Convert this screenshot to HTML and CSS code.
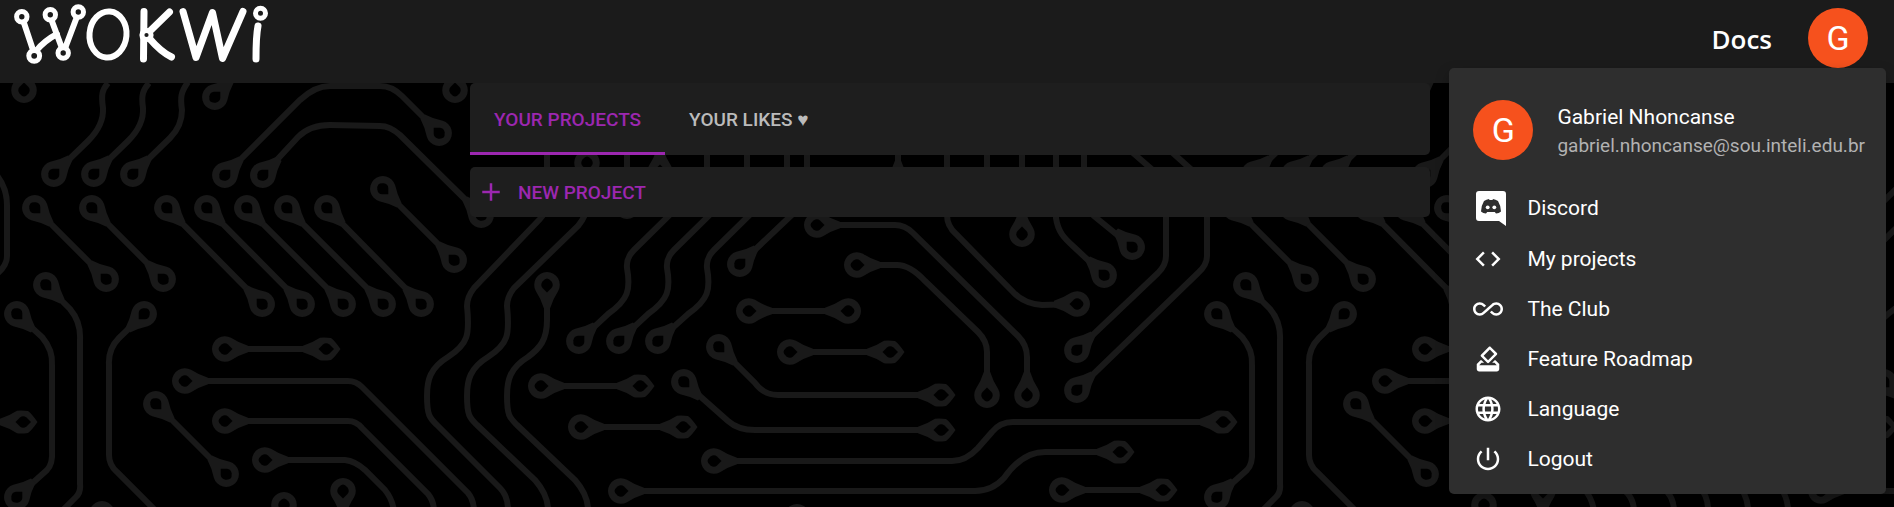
FILE: index.html
```html
<!DOCTYPE html>
<html lang="en">
<head>
<meta charset="utf-8">
<meta name="viewport" content="width=device-width, initial-scale=1">
<title>Wokwi - My projects</title>
<link rel="stylesheet" href="styles.css">
</head>
<body class="page">
<svg class="circuit" aria-hidden="true">
  <defs>
    <g id="pad">
      <path class="pad-body" d="M6 -11.2Q14 -6 23 -3.2V3.2Q14 6 6 11.2A12.8 12.8 0 1 1 6 -11.2Z"/>
      <path class="pad-hole" d="M7.5 0L3 4.5Q0 7 -3.5 4.5Q-6.5 2 -6.5 0Q-6.5 -2 -3.5 -4.5Q0 -7 3 -4.5Z"/>
    </g>
    <g id="pad-tip">
      <path class="pad-body" d="M6 -11.2Q14 -6 23 -3.2V3.2Q14 6 6 11.2Q2 12 -5 11Q-9 8 -14.5 0Q-9 -8 -5 -11Q2 -12 6 -11.2Z"/>
      <path class="pad-hole" d="M7.500 0L3 4.500Q0 7 -3.500 4.500L-8 0L-3.500 -4.500Q0 -7 3 -4.500Z"/>
    </g>
    <g id="tile">
      <g class="trace">
        <path d="M54 174L88 141Q104 125 103 108C101 95 102 90 108 83"/>
        <path d="M94 174L128 141Q144 125 143 108C141 95 143 90 149 83"/>
        <path d="M133 174L170 138Q182 126 182 110C180 97 181 92 188 82"/>
        <path d="M215 97L234 78"/>
        <path d="M225 175L300 100Q315 86 330 86H380Q392 86 402 96L439 133"/>
        <path d="M263 175L298 137Q310 125 330 125L380 126Q390 126 400 135L481 215"/>
        <path d="M35 208L106 279M92 208L163 279M167 208L262 304M207 208L302 304M247 208L343 304M287 208L383 304M327 208L421 304M383 189L454 260"/>
        <path d="M17 314L42 337Q53 350 52 365V450Q53 464 47 470L17 497"/>
        <path d="M46 285L70 309Q81 322 80 340V484Q81 492 76 497L55 518"/>
        <path d="M144 314L119 338Q108 349 109 365V455Q109 465 117 472L160 515"/>
        <path d="M225 349H326M156 404L226 474M343 491V515"/>
        <path d="M185 381H348Q356 381 362 387L468 493Q474 500 474 512"/>
        <path d="M225 421H348Q356 421 362 428L428 494Q434 501 434 512"/>
        <path d="M265 460H345Q355 461 365 470L385 490Q393 500 394 512"/>
        <path d="M547 150V195Q547 212 540 219L474 288Q467 297 467 306C470 335 468 344 448 357C430 368 427 380 427 396C427 416 430 418 437 425L500 488Q508 496 508 510"/>
        <path d="M587 163V205Q587 215 578 226L514 288Q507 297 507 306C510 335 508 344 488 357C470 368 467 380 467 396C467 416 470 418 477 425L535 480Q548 495 548 510"/>
        <path d="M547 285V320C547 340 540 348 528 357C510 368 507 380 507 396C507 416 510 418 517 425L575 480Q588 495 588 510"/>
        <path d="M627 150V207M660 150V172M898 150V180M987 150V170M1022 150V234"/>
        <path d="M707 150V168Q707 178 698 187L634 250Q626 258 627 268C631 290 628 300 608 314L579 341"/>
        <path d="M747 150V168Q747 178 738 187L674 250Q666 258 667 268C671 290 668 300 648 314L619 341"/>
        <path d="M787 150V168Q787 178 778 187L714 250Q706 258 707 268C711 290 708 300 688 314L658 341"/>
        <path d="M807 150V190Q807 200 798 209L740 264"/>
        <path d="M817 225H895Q905 225 913 233L1018 336Q1027 345 1027 357V395"/>
        <path d="M857 265H897Q910 265 925 281L978 332Q987 341 987 352V395"/>
        <path d="M947 150V215Q947 226 956 234L1013 292Q1024 304 1042 305L1077 304"/>
        <path d="M1056 150V218C1058 232 1064 238 1074 247L1104 275"/>
        <path d="M1084 150V195Q1084 207 1094 216L1132 247"/>
        <path d="M1125 146L1155 172Q1166 182 1166 200V256Q1166 265 1158 273L1077 350"/>
        <path d="M1165 146L1194 172Q1207 186 1207 205V256Q1207 265 1198 273L1077 390"/>
        <path d="M749 311H848M790 352H890M541 386H640M581 427H683M1062 490H1163"/>
        <path d="M719 347L755 383Q764 395 778 395H941"/>
        <path d="M684 382L728 421Q738 430 755 430H941"/>
        <path d="M714 461H950Q965 462 978 448L992 432Q1000 422 1013 422H1223"/>
        <path d="M621 491H975Q992 491 1004 478Q1022 452 1045 452H1120"/>
      </g>
      <use href="#pad" transform="translate(24 90) rotate(-90)"/>
      <use href="#pad" transform="translate(54 174) rotate(-45)"/>
      <use href="#pad" transform="translate(94 174) rotate(-45)"/>
      <use href="#pad" transform="translate(133 174) rotate(-45)"/>
      <use href="#pad" transform="translate(215 97) rotate(-45)"/>
      <use href="#pad" transform="translate(225 175) rotate(-45)"/>
      <use href="#pad" transform="translate(263 175) rotate(-45)"/>
      <use href="#pad" transform="translate(439 133) rotate(-135)"/>
      <use href="#pad" transform="translate(455 90) rotate(-90)"/>
      <use href="#pad" transform="translate(481 215) rotate(-135)"/>
      <use href="#pad" transform="translate(35 208) rotate(45)"/>
      <use href="#pad" transform="translate(106 279) rotate(-135)"/>
      <use href="#pad" transform="translate(92 208) rotate(45)"/>
      <use href="#pad" transform="translate(163 279) rotate(-135)"/>
      <use href="#pad" transform="translate(167 208) rotate(45)"/>
      <use href="#pad" transform="translate(262 304) rotate(-135)"/>
      <use href="#pad" transform="translate(207 208) rotate(45)"/>
      <use href="#pad" transform="translate(302 304) rotate(-135)"/>
      <use href="#pad" transform="translate(247 208) rotate(45)"/>
      <use href="#pad" transform="translate(343 304) rotate(-135)"/>
      <use href="#pad" transform="translate(287 208) rotate(45)"/>
      <use href="#pad" transform="translate(383 304) rotate(-135)"/>
      <use href="#pad" transform="translate(327 208) rotate(45)"/>
      <use href="#pad" transform="translate(421 304) rotate(-135)"/>
      <use href="#pad" transform="translate(383 189) rotate(45)"/>
      <use href="#pad" transform="translate(454 260) rotate(-135)"/>
      <use href="#pad" transform="translate(17 314) rotate(45)"/>
      <use href="#pad" transform="translate(17 497) rotate(-45)"/>
      <use href="#pad" transform="translate(46 285) rotate(45)"/>
      <use href="#pad" transform="translate(144 314) rotate(135)"/>
      <use href="#pad" transform="translate(225 349)"/>
      <use href="#pad-tip" transform="translate(326 349) rotate(180)"/>
      <use href="#pad" transform="translate(185 381)"/>
      <use href="#pad" transform="translate(225 421)"/>
      <use href="#pad" transform="translate(265 460)"/>
      <use href="#pad" transform="translate(156 404) rotate(45)"/>
      <use href="#pad" transform="translate(226 474) rotate(-135)"/>
      <use href="#pad" transform="translate(343 491) rotate(90)"/>
      <use href="#pad" transform="translate(284 505) rotate(90)"/>
      <use href="#pad" transform="translate(102 514) rotate(90)"/>
      <use href="#pad" transform="translate(797 517) rotate(90)"/>
      <use href="#pad" transform="translate(587 163) rotate(90)"/>
      <use href="#pad" transform="translate(547 285) rotate(90)"/>
      <use href="#pad" transform="translate(627 206) rotate(-90)"/>
      <use href="#pad" transform="translate(660 172) rotate(-90)"/>
      <use href="#pad" transform="translate(898 184) rotate(-90)"/>
      <use href="#pad" transform="translate(579 341) rotate(-45)"/>
      <use href="#pad" transform="translate(619 341) rotate(-45)"/>
      <use href="#pad" transform="translate(658 341) rotate(-45)"/>
      <use href="#pad" transform="translate(740 264) rotate(-45)"/>
      <use href="#pad" transform="translate(817 225)"/>
      <use href="#pad" transform="translate(857 265)"/>
      <use href="#pad" transform="translate(987 395) rotate(-90)"/>
      <use href="#pad" transform="translate(1027 395) rotate(-90)"/>
      <use href="#pad" transform="translate(1022 234) rotate(-90)"/>
      <use href="#pad" transform="translate(1077 304) rotate(180)"/>
      <use href="#pad" transform="translate(1104 275) rotate(-135)"/>
      <use href="#pad" transform="translate(1132 247) rotate(-135)"/>
      <use href="#pad" transform="translate(1077 350) rotate(-45)"/>
      <use href="#pad" transform="translate(1077 390) rotate(-45)"/>
      <use href="#pad" transform="translate(749 311)"/>
      <use href="#pad" transform="translate(848 311) rotate(180)"/>
      <use href="#pad" transform="translate(790 352)"/>
      <use href="#pad-tip" transform="translate(890 352) rotate(180)"/>
      <use href="#pad" transform="translate(541 386)"/>
      <use href="#pad-tip" transform="translate(640 386) rotate(180)"/>
      <use href="#pad" transform="translate(581 427)"/>
      <use href="#pad-tip" transform="translate(683 427) rotate(180)"/>
      <use href="#pad" transform="translate(719 347) rotate(45)"/>
      <use href="#pad" transform="translate(684 382) rotate(45)"/>
      <use href="#pad-tip" transform="translate(941 395) rotate(180)"/>
      <use href="#pad-tip" transform="translate(941 430) rotate(180)"/>
      <use href="#pad" transform="translate(714 461)"/>
      <use href="#pad" transform="translate(621 491)"/>
      <use href="#pad-tip" transform="translate(1223 422) rotate(180)"/>
      <use href="#pad-tip" transform="translate(1120 452) rotate(180)"/>
      <use href="#pad" transform="translate(1062 490)"/>
      <use href="#pad-tip" transform="translate(1163 490) rotate(180)"/>
    </g>
  </defs>
  <use href="#tile" x="-1200"/>
  <use href="#tile"/>
  <use href="#tile" x="1200"/>
</svg>

<header class="topbar">
  <a class="logo-link" href="#" aria-label="Wokwi">
    <svg class="logo" viewBox="0 0 280 66" aria-hidden="true">
      <g class="logo-stroke">
        <path d="M23 20L34 53M36 51Q44 41 57 34M50 16L63 51M78 14L64 51"/>
        <ellipse cx="108" cy="34.500" rx="18.500" ry="23" transform="rotate(5 108 34.5)"/>
        <path class="logo-bold" d="M144 11.500L143.500 59M169.500 12L149 32M149 38Q161 52 171.500 57"/>
        <path class="logo-bold" d="M183 11.500L196 57.500L212.500 12.500L222.500 58.500L243 11.500M258 26Q256 36 256 59"/>
      </g>
      <g class="logo-ring">
        <circle cx="21.800" cy="16.800" r="5.200"/>
        <circle cx="50.300" cy="14.800" r="5.200"/>
        <circle cx="78.300" cy="12" r="5.200"/>
        <circle cx="34.200" cy="55.800" r="5.400"/>
        <circle cx="63.200" cy="53" r="5.200"/>
        <circle cx="146.500" cy="35" r="4.600"/>
        <circle cx="260.500" cy="13.300" r="5"/>
      </g>
    </svg>
  </a>
  <nav class="topnav">
    <a class="docs" href="#">Docs</a>
    <button class="avatar" type="button" aria-label="Account menu" aria-expanded="true">G</button>
  </nav>
</header>

<main class="content">
  <div class="card tabs" role="tablist">
    <button class="tab tab-active" type="button" role="tab" aria-selected="true">YOUR PROJECTS</button>
    <button class="tab" type="button" role="tab" aria-selected="false">YOUR LIKES ♥</button>
  </div>
  <div class="card">
    <button class="new-project" type="button">
      <svg class="icon" viewBox="0 0 24 24" aria-hidden="true"><path d="M19 13h-6v6h-2v-6H5v-2h6V5h2v6h6v2z"/></svg>
      <span>NEW PROJECT</span>
    </button>
  </div>
</main>

<aside class="menu" aria-label="Account">
  <div class="profile">
    <span class="avatar">G</span>
    <div class="identity">
      <span class="name">Gabriel Nhoncanse</span>
      <span class="email">gabriel.nhoncanse@sou.inteli.edu.br</span>
    </div>
  </div>
  <a class="item item-tall" href="#">
    <svg class="icon icon-discord" viewBox="-3 0 33 35" aria-hidden="true"><path d="M3 0H27Q30 0 30 3V35L23 30H3Q0 30 0 27V3Q0 0 3 0Z"/><path class="face" d="M8 10Q10.500 8.300 13 8L13.500 9H16.500L17 8Q19.500 8.300 22 10Q25 15 25 20.500Q23 22.500 20 22.500L18.800 21H11.200L10 22.500Q7 22.500 5 20.500Q5 15 8 10Z"/><circle cx="11.700" cy="16.300" r="1.900"/><circle cx="18.300" cy="16.300" r="1.900"/></svg>
    <span>Discord</span>
  </a>
  <a class="item" href="#">
    <svg class="icon" viewBox="0 0 24 24" aria-hidden="true"><path d="M9.400 16.600 4.800 12l4.600-4.600L8 6l-6 6 6 6 1.400-1.400zm5.200 0 4.600-4.600-4.600-4.600L16 6l6 6-6 6-1.400-1.400z"/></svg>
    <span>My projects</span>
  </a>
  <a class="item" href="#">
    <svg class="icon" viewBox="0 0 24 24" aria-hidden="true"><path d="M18.600 6.620c-1.440 0-2.800.56-3.770 1.530L12 10.660 10.480 12h.01L7.800 14.390c-.64.64-1.490.99-2.400.99-1.870 0-3.390-1.510-3.390-3.380S3.530 8.620 5.400 8.620c.91 0 1.760.35 2.440 1.030l1.130 1 1.510-1.340L9.220 8.200C8.200 7.180 6.840 6.620 5.400 6.620 2.420 6.620 0 9.040 0 12s2.420 5.380 5.400 5.380c1.440 0 2.800-.56 3.770-1.530l2.830-2.500.01.01L13.520 12h-.01l2.690-2.390c.64-.64 1.490-.99 2.400-.99 1.870 0 3.390 1.510 3.390 3.380s-1.520 3.380-3.390 3.380c-.9 0-1.760-.35-2.440-1.030l-1.140-1.010-1.510 1.340 1.270 1.120c1.020 1.010 2.370 1.570 3.820 1.570 2.980 0 5.400-2.410 5.400-5.380s-2.420-5.370-5.400-5.370z"/></svg>
    <span>The Club</span>
  </a>
  <a class="item" href="#">
    <svg class="icon" viewBox="0 0 24 24" aria-hidden="true"><path d="M18 13h-.68l-2 2h1.910L19 17H5l1.780-2h2.050l-2-2H6l-3 3v4c0 1.100.89 2 1.990 2H19c1.100 0 2-.89 2-2v-4l-3-3zm-1-5.050-4.950 4.950-3.540-3.540 4.950-4.950L17 7.950zm-4.240-5.660L6.390 8.660c-.39.39-.39 1.020 0 1.410l4.950 4.950c.39.39 1.020.39 1.410 0l6.360-6.360c.39-.39.39-1.020 0-1.410L14.160 2.300c-.38-.4-1.010-.4-1.400-.01z"/></svg>
    <span>Feature Roadmap</span>
  </a>
  <a class="item" href="#">
    <svg class="icon" viewBox="0 0 24 24" aria-hidden="true"><path d="M11.990 2C6.470 2 2 6.480 2 12s4.470 10 9.990 10C17.520 22 22 17.520 22 12S17.520 2 11.990 2zm6.930 6h-2.950c-.32-1.250-.78-2.450-1.380-3.560 1.840.63 3.370 1.910 4.330 3.560zM12 4.040c.83 1.200 1.480 2.530 1.910 3.960h-3.820c.43-1.430 1.080-2.760 1.910-3.960zM4.260 14C4.100 13.360 4 12.690 4 12s.1-1.360.26-2h3.380c-.08.66-.14 1.320-.14 2s.06 1.340.14 2H4.260zm.82 2h2.950c.32 1.250.78 2.450 1.380 3.560-1.840-.63-3.370-1.900-4.330-3.560zm2.950-8H5.080c.96-1.660 2.490-2.930 4.330-3.560C8.810 5.550 8.350 6.750 8.030 8zM12 19.960c-.83-1.200-1.480-2.530-1.910-3.960h3.820c-.43 1.430-1.080 2.760-1.910 3.960zM14.340 14H9.660c-.09-.66-.16-1.320-.16-2s.07-1.350.16-2h4.680c.09.65.16 1.320.16 2s-.07 1.340-.16 2zm.25 5.560c.6-1.110 1.060-2.310 1.380-3.560h2.950c-.96 1.650-2.490 2.930-4.330 3.560zM16.360 14c.08-.66.14-1.320.14-2s-.06-1.340-.14-2h3.380c.16.64.26 1.310.26 2s-.1 1.360-.26 2h-3.380z"/></svg>
    <span>Language</span>
  </a>
  <button class="item" type="button">
    <svg class="icon" viewBox="0 0 24 24" aria-hidden="true"><path d="M13 3h-2v10h2V3zm4.830 2.170-1.420 1.420C17.990 7.860 19 9.810 19 12c0 3.870-3.130 7-7 7s-7-3.130-7-7c0-2.190 1.010-4.140 2.580-5.420L6.170 5.170C4.230 6.820 3 9.260 3 12c0 4.970 4.030 9 9 9s9-4.030 9-9c0-2.740-1.230-5.180-3.170-6.830z"/></svg>
    <span>Logout</span>
  </button>
</aside>
</body>
</html>
```

FILE: styles.css
```css
*,
*::before,
*::after {
  box-sizing: border-box;
}

.page {
  position: relative;
  min-height: 100vh;
  margin: 0;
  background: #000;
  color: #fff;
  font-family: Roboto, "Liberation Sans", sans-serif;
  font-size: 21px;
}

button {
  border: 0;
  padding: 0;
  background: none;
  color: inherit;
  font: inherit;
  cursor: pointer;
}

a {
  color: inherit;
  text-decoration: none;
}

/* Circuit board backdrop */
.circuit {
  position: absolute;
  inset: 0;
  z-index: -1;
  width: 100%;
  height: 100%;
  overflow: hidden;
}

.trace {
  fill: none;
  stroke: #191919;
  stroke-width: 6px;
}

.pad-body {
  fill: #191919;
}

.pad-hole {
  fill: #000;
}

/* Top bar */
.topbar {
  display: flex;
  align-items: flex-start;
  justify-content: space-between;
  height: 83px;
  padding-right: 26px;
  background: #1b1b1b;
}

.logo {
  display: block;
  width: 280px;
  height: 66px;
}

.logo-stroke {
  fill: none;
  stroke: #fff;
  stroke-width: 6px;
  stroke-linecap: round;
  stroke-linejoin: round;
}

.logo-bold {
  stroke-width: 7px;
}

.logo-ring {
  fill: #1b1b1b;
  stroke: #fff;
  stroke-width: 5px;
}

.topnav {
  display: flex;
  align-items: center;
  gap: 36px;
  padding-top: 8px;
}

.docs {
  padding-top: 2px;
  font-family: "Open Sans", "Noto Sans", sans-serif;
  font-size: 26px;
  font-weight: 600;
}

.avatar {
  display: flex;
  flex: none;
  align-items: center;
  justify-content: center;
  width: 60px;
  height: 60px;
  border-radius: 50%;
  background: #f6511d;
  color: #fff;
  font-size: 34px;
}

/* Project list */
.content {
  display: grid;
  gap: 12px;
  max-width: 966px;
  margin: 0 auto;
  padding-left: 6px;
}

.card {
  border-radius: 5px;
  background: #1e1e1e;
}

.tabs {
  display: flex;
}

.tab {
  height: 72px;
  padding: 0 24px;
  border-top: 3px solid transparent;
  border-bottom: 3px solid transparent;
  color: #bbb;
  font-size: 19px;
  font-weight: 500;
}

.tab-active {
  border-bottom-color: #9c27b0;
  color: #9c27b0;
}

.new-project {
  display: flex;
  align-items: center;
  gap: 12px;
  width: 100%;
  height: 50px;
  padding: 0 6px;
  color: #9c27b0;
  font-size: 19px;
  font-weight: 500;
}

.icon {
  flex: none;
  width: 30px;
  height: 30px;
  fill: currentColor;
}

/* Account menu */
.menu {
  position: absolute;
  top: 68px;
  right: 8px;
  padding: 10px 0;
  border-radius: 5px;
  background: #2e2e2e;
  box-shadow: 0 6px 14px rgba(0, 0, 0, 0.3);
}

.profile {
  display: flex;
  align-items: center;
  gap: 24px;
  padding: 22px 21px 22px 24px;
}

.identity {
  display: flex;
  flex-direction: column;
  padding-top: 2px;
}

.name {
  line-height: 30px;
}

.email {
  color: #b2b2b2;
  font-size: 19px;
  line-height: 28px;
}

.item {
  display: flex;
  align-items: center;
  gap: 24px;
  width: 100%;
  height: 50px;
  padding: 0 24px;
}

.item-tall {
  height: 52px;
}

.icon-discord {
  width: 33px;
  height: 35px;
  margin-right: -3px;
}

.face {
  fill: #2e2e2e;
}
```
